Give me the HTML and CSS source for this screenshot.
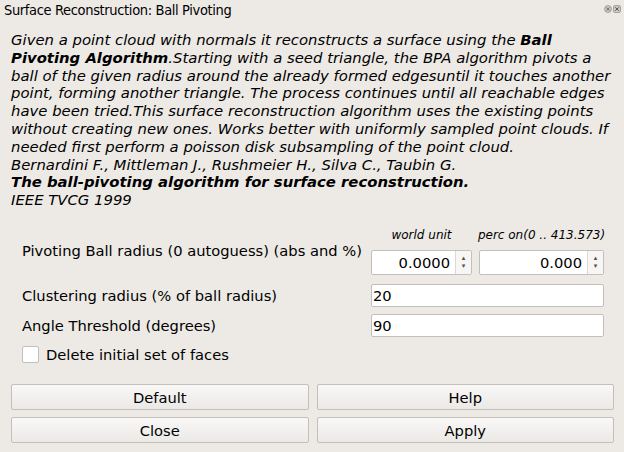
FILE: index.html
```html
<!DOCTYPE html>
<html lang="en">
<head>
    <meta charset="UTF-8">
    <title>Surface Reconstruction: Ball Pivoting</title>
    <link rel="stylesheet" href="styles.css">
</head>
<body>
    <div class="dialog">
        <div class="titlebar">
            <span class="title">Surface Reconstruction: Ball Pivoting</span>
            <span class="win-buttons">
                <svg class="win-btn" width="8" height="8" viewBox="0 0 8 8">
                    <circle cx="4" cy="4" r="3.5" fill="#c9c6c2" stroke="#9a9792" stroke-width="0.8"/>
                    <path d="M2.5 2.5 L5.5 5.5 M5.5 2.5 L2.5 5.5" stroke="#6e6b67" stroke-width="0.9"/>
                </svg>
                <svg class="win-btn" width="8" height="8" viewBox="0 0 8 8">
                    <rect x="0.5" y="0.5" width="7" height="7" rx="1.5" fill="#c9c6c2" stroke="#9a9792" stroke-width="0.8"/>
                    <path d="M2.3 2.3 L5.7 5.7 M5.7 2.3 L2.3 5.7" stroke="#5f5c58" stroke-width="1"/>
                </svg>
            </span>
        </div>

        <p class="description">Given a point cloud with normals it reconstructs a surface using the <b>Ball Pivoting Algorithm</b>.Starting with a seed triangle, the BPA algorithm pivots a ball of the given radius around the already formed edgesuntil it touches another point, forming another triangle. The process continues until all reachable edges have been tried.This surface reconstruction algorithm uses the existing points without creating new ones. Works better with uniformly sampled point clouds. If needed first perform a poisson disk subsampling of the point cloud.<br>Bernardini F., Mittleman J., Rushmeier H., Silva C., Taubin G.<br><b>The ball-pivoting algorithm for surface reconstruction.</b><br>IEEE TVCG 1999</p>

        <div class="params">
            <div class="param-row radius-row">
                <label class="param-label">Pivoting Ball radius (0 autoguess) (abs and %)</label>
                <div class="spin-pair">
                    <div class="spin-col spin-abs">
                        <span class="spin-caption">world unit</span>
                        <div class="spinbox">
                            <span class="spin-value">0.0000</span>
                            <span class="spin-arrows"><span>&#x25B4;</span><span>&#x25BE;</span></span>
                        </div>
                    </div>
                    <div class="spin-col spin-perc">
                        <span class="spin-caption">perc on(0 .. 413.573)</span>
                        <div class="spinbox">
                            <span class="spin-value">0.000</span>
                            <span class="spin-arrows"><span>&#x25B4;</span><span>&#x25BE;</span></span>
                        </div>
                    </div>
                </div>
            </div>
            <div class="param-row">
                <label class="param-label">Clustering radius (% of ball radius)</label>
                <input class="line-edit" type="text" value="20">
            </div>
            <div class="param-row">
                <label class="param-label">Angle Threshold (degrees)</label>
                <input class="line-edit" type="text" value="90">
            </div>
            <label class="check-row">
                <span class="checkbox"></span>
                Delete initial set of faces
            </label>
        </div>

        <div class="buttons">
            <button class="push-btn">Default</button>
            <button class="push-btn">Help</button>
            <button class="push-btn">Close</button>
            <button class="push-btn">Apply</button>
        </div>
    </div>
</body>
</html>
```

FILE: styles.css
```css
body {
    margin: 0;
    padding: 0;
    background: #edeae6;
    color: #000000;
    font-family: 'DejaVu Sans', sans-serif;
    font-size: 14.7px;
}
.dialog {
    width: 624px;
    height: 452px;
    display: flex;
    flex-direction: column;
}
.titlebar {
    height: 20px;
    display: flex;
    align-items: center;
    justify-content: space-between;
    padding: 0 3px 0 4px;
}
.title {
    font-family: 'DejaVu Sans Condensed', 'DejaVu Sans', sans-serif;
    font-stretch: condensed;
    font-size: 14.5px;
    letter-spacing: -0.35px;
}
.win-buttons {
    display: flex;
    gap: 1px;
    margin-top: -3px;
}
.description {
    margin: 12px 11px 0 11px;
    font-size: 14.85px;
    font-style: italic;
    line-height: 17.8px;
}
.params {
    margin-top: 17px;
    padding: 0 20px 0 22px;
}
.param-row {
    display: flex;
    align-items: center;
    justify-content: space-between;
    margin-bottom: 7px;
}
.radius-row {
    margin-bottom: 9px;
}
.spin-pair {
    display: flex;
    gap: 7px;
}
.spin-col {
    display: flex;
    flex-direction: column;
    align-items: center;
}
.spin-abs {
    width: 101px;
}
.spin-perc {
    width: 125px;
}
.spin-caption {
    font-size: 12px;
    font-style: italic;
    white-space: nowrap;
    height: 16px;
    line-height: 16px;
    margin-bottom: 7px;
}
.spinbox {
    width: 100%;
    height: 25px;
    box-sizing: border-box;
    background: #ffffff;
    border: 1px solid #c3bfba;
    border-radius: 2px;
    display: flex;
    align-items: stretch;
}
.spin-value {
    flex: 1;
    text-align: right;
    padding-right: 5px;
    line-height: 23px;
}
.spin-arrows {
    width: 15px;
    border-left: 1px solid #dcd9d5;
    background: #f7f6f5;
    display: flex;
    flex-direction: column;
    align-items: center;
    justify-content: center;
    font-size: 7px;
    line-height: 8px;
    color: #55524e;
}
.line-edit {
    width: 233px;
    height: 23px;
    box-sizing: border-box;
    border: 1px solid #c3bfba;
    border-radius: 2px;
    background: #ffffff;
    font-family: 'DejaVu Sans', sans-serif;
    font-size: 14.7px;
    padding: 0 1px;
    margin: 0;
}
.check-row {
    display: flex;
    align-items: center;
    gap: 7px;
    margin-top: 9px;
}
.checkbox {
    width: 17px;
    height: 17px;
    box-sizing: border-box;
    background: #ffffff;
    border: 1px solid #c3bfba;
    border-radius: 2px;
}
.buttons {
    margin-top: auto;
    margin-bottom: 9px;
    padding: 0 10px 0 11px;
    display: grid;
    grid-template-columns: 1fr 1fr;
    gap: 7px 8px;
}
.push-btn {
    height: 26px;
    font-family: 'DejaVu Sans', sans-serif;
    font-size: 14.7px;
    color: #000000;
    background: linear-gradient(#f9f8f7, #ebe9e6);
    border: 1px solid #c3bfba;
    border-radius: 2px;
    padding: 0;
}
```
